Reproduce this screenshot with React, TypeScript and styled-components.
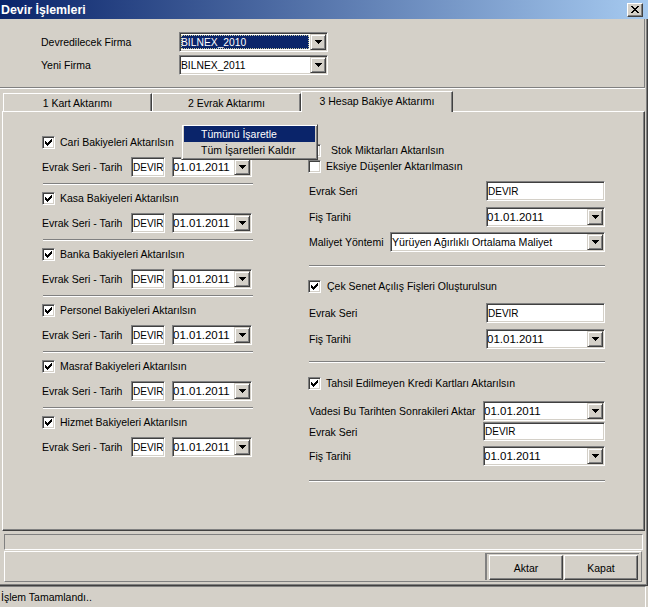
import React from 'react';
import styled, { createGlobalStyle, css } from 'styled-components';

const GlobalStyle = createGlobalStyle`
  * { box-sizing: border-box; }
  html, body { margin: 0; padding: 0; background: #d4d0c8; }
  body {
    font-family: "Liberation Sans", Arial, sans-serif;
    font-size: 10.5px;
    color: #000;
  }
`;

const sunken = css`
  border: 1px solid;
  border-color: #808080 #ffffff #ffffff #808080;
  box-shadow: inset 1px 1px 0 #404040, inset -1px -1px 0 #d4d0c8;
`;

const raised = css`
  border: 1px solid;
  border-color: #ffffff #404040 #404040 #ffffff;
  box-shadow: inset -1px -1px 0 #808080, inset 1px 1px 0 #d4d0c8;
`;

const Screen = styled.div`
  width: 648px;
  height: 607px;
  display: flex;
  flex-direction: column;
  overflow: hidden;
  position: relative;
`;

const Window = styled.div`
  height: 586px;
  flex: none;
  display: flex;
  flex-direction: column;
`;

const TitleBar = styled.div`
  height: 19px;
  flex: none;
  display: flex;
  align-items: center;
  justify-content: space-between;
  padding: 0 5px 0 1px;
  background: linear-gradient(to right, #0a246a, #a6caf0);
  color: #fff;
  font-weight: bold;
  font-size: 12.4px;
`;

const CloseButton = styled.div`
  width: 16px;
  height: 14px;
  background: #d4d0c8;
  ${raised};
  display: flex;
  align-items: center;
  justify-content: center;
`;

const WindowBody = styled.div`
  flex: 1;
  display: flex;
  flex-direction: column;
  border-right: 1px solid #404040;
  border-bottom: 1px solid #404040;
  box-shadow: inset -1px -1px 0 #808080;
  padding-right: 2px;
`;

const Header = styled.div`
  height: 69px;
  flex: none;
  padding: 13px 0 0 41px;
  display: grid;
  grid-template-columns: 138px 149px;
  grid-auto-rows: 20px;
  row-gap: 3px;
  align-items: center;
  border-bottom: 1px solid #808080;
  border-right: 1px solid #808080;
`;

const TabStrip = styled.div`
  height: 23px;
  flex: none;
  display: flex;
  align-items: flex-end;
  padding-left: 3px;
  border-top: 1px solid #ffffff;
`;

const Tab = styled.div<{ $active?: boolean; $w: number }>`
  width: ${p => p.$w}px;
  height: ${p => (p.$active ? 21 : 18)}px;
  margin-bottom: ${p => (p.$active ? -1 : 0)}px;
  position: relative;
  z-index: ${p => (p.$active ? 1 : 0)};
  background: #d4d0c8;
  border-top: 1px solid #fff;
  border-left: 1px solid #fff;
  border-right: 1px solid #404040;
  box-shadow: inset -1px 0 0 #808080;
  display: flex;
  justify-content: center;
  align-items: center;
  padding-bottom: ${p => (p.$active ? 3 : 0)}px;
`;

const Panel = styled.div`
  height: 420px;
  flex: none;
  margin-left: 2px;
  border: 1px solid;
  border-color: #fff #404040 #404040 #fff;
  box-shadow: inset -1px -1px 0 #808080;
  display: grid;
  grid-template-columns: 211px 297px;
  column-gap: 55px;
  align-items: start;
  padding-left: 39px;
`;

const Column = styled.div<{ $top: number }>`
  margin-top: ${p => p.$top}px;
  display: flex;
  flex-direction: column;
`;

const Group = styled.div`
  display: flex;
  flex-direction: column;
  margin-bottom: 5px;
`;

const CheckRow = styled.div<{ $gap?: number; $mt?: number }>`
  height: 16px;
  margin-top: ${p => p.$mt ?? 0}px;
  display: flex;
  align-items: center;
  gap: ${p => p.$gap ?? 5}px;
  white-space: nowrap;
`;

const CheckBoxBox = styled.span`
  width: 13px;
  height: 13px;
  flex: none;
  background: #fff;
  ${sunken};
  display: inline-flex;
  align-items: center;
  justify-content: center;
`;

const SeriRow = styled.div`
  height: 20px;
  margin-top: 7px;
  display: grid;
  grid-template-columns: 82px 34px 80px;
  column-gap: 7px;
  align-items: center;
  white-space: nowrap;
`;

const FieldRow = styled.div<{ $mt: number; $h?: number }>`
  height: ${p => p.$h ?? 20}px;
  margin-top: ${p => p.$mt}px;
  display: flex;
  align-items: center;
  justify-content: space-between;
  padding-left: 1px;
  white-space: nowrap;
`;

const Separator = styled.div<{ $mt: number }>`
  height: 2px;
  margin-top: ${p => p.$mt}px;
  margin-left: 1px;
  border-top: 1px solid #808080;
  border-bottom: 1px solid #fff;
`;

const TextBox = styled.div<{ $w?: number; $h?: number }>`
  width: ${p => (p.$w ? `${p.$w}px` : 'auto')};
  height: ${p => p.$h ?? 20}px;
  background: #fff;
  ${sunken};
  font-size: 10px;
  padding-left: 1px;
  display: flex;
  align-items: center;
  overflow: hidden;
  white-space: nowrap;
`;

const ComboBox = styled.div<{ $w?: number; $h?: number }>`
  width: ${p => (p.$w ? `${p.$w}px` : 'auto')};
  height: ${p => p.$h ?? 20}px;
  background: #fff;
  ${sunken};
  padding: 1px;
  display: flex;
  align-items: stretch;
`;

const ComboText = styled.div<{ $size: number; $selected?: boolean }>`
  flex: 1;
  min-width: 0;
  display: flex;
  align-items: center;
  overflow: hidden;
  white-space: nowrap;
  font-size: ${p => p.$size}px;
  text-indent: ${p => (p.$size > 11 ? -1 : 0)}px;
  ${p =>
    p.$selected &&
    css`
      margin: 1px 1px 1px 0;
      background: #0a246a;
      color: #fff;
      outline: 1px dotted #c8c8a0;
      outline-offset: -1px;
    `}
`;

const ArrowButton = styled.div`
  width: 16px;
  flex: none;
  background: #d4d0c8;
  border: 1px solid;
  border-color: #d4d0c8 #404040 #404040 #d4d0c8;
  box-shadow: inset 1px 1px 0 #fff, inset -1px -1px 0 #808080;
  display: flex;
  align-items: center;
  justify-content: center;
`;

const Popup = styled.div`
  position: absolute;
  left: 181px;
  top: 124px;
  width: 137px;
  height: 36px;
  background: #d4d0c8;
  border: 1px solid;
  border-color: #d4d0c8 #404040 #404040 #d4d0c8;
  box-shadow: inset 1px 1px 0 #fff, inset -1px -1px 0 #808080;
  padding: 1px 2px;
  z-index: 5;
`;

const MenuItem = styled.div<{ $hot?: boolean }>`
  height: 16px;
  display: flex;
  align-items: center;
  padding-left: 17px;
  background: ${p => (p.$hot ? '#0a246a' : 'transparent')};
  color: ${p => (p.$hot ? '#fff' : '#000')};
  white-space: nowrap;
`;

const EmptyBox = styled.div`
  height: 16px;
  flex: none;
  margin: 3px 2px 0 4px;
  border-top: 1px solid #808080;
  border-left: 1px solid #808080;
  border-bottom: 1px solid #fff;
  border-right: 1px solid #fff;
`;

const ButtonPanel = styled.div`
  height: 31px;
  flex: none;
  margin: 1px 3px 0 4px;
  border: 1px solid;
  border-color: #fff #808080 #808080 #fff;
  display: flex;
  justify-content: flex-end;
  align-items: center;
  padding-right: 2px;
`;

const ButtonGroup = styled.div`
  height: 27px;
  display: flex;
  gap: 1px;
  padding: 1px 1px 1px 2px;
  border-top: 1px solid #808080;
  border-left: 2px solid #808080;
`;

const Button = styled.div`
  width: 74px;
  height: 25px;
  background: #d4d0c8;
  ${raised};
  display: flex;
  align-items: center;
  justify-content: center;
`;

const StatusBar = styled.div`
  height: 21px;
  flex: none;
  width: 646px;
  border-top: 1px solid #808080;
  border-right: 1px solid #fff;
  display: flex;
  align-items: center;
  padding-left: 1px;
`;

function CheckBox({ checked }: { checked?: boolean }) {
  return (
    <CheckBoxBox>
      {checked && (
        <svg width="7" height="7" viewBox="0 0 7 7" shapeRendering="crispEdges">
          <path
            fill="#000"
            d="M6 0h1v1h-1z M5 1h2v1h-2z M0 2h1v1h-1z M4 2h3v1h-3z M0 3h2v1h-2z M3 3h3v1h-3z M0 4h5v1h-5z M1 5h3v1h-3z M2 6h1v1h-1z"
          />
        </svg>
      )}
    </CheckBoxBox>
  );
}

function Combo({
  value,
  width,
  height,
  size = 10.5,
  selected,
}: {
  value: string;
  width?: number;
  height?: number;
  size?: number;
  selected?: boolean;
}) {
  return (
    <ComboBox $w={width} $h={height}>
      <ComboText $size={size} $selected={selected}>
        {value}
      </ComboText>
      <ArrowButton>
        <svg width="7" height="4" viewBox="0 0 7 4" shapeRendering="crispEdges">
          <path fill="#000" d="M0 0h7v1h-7z M1 1h5v1h-5z M2 2h3v1h-3z M3 3h1v1h-1z" />
        </svg>
      </ArrowButton>
    </ComboBox>
  );
}

const leftGroups = [
  'Cari Bakiyeleri Aktarılsın',
  'Kasa Bakiyeleri Aktarılsın',
  'Banka Bakiyeleri Aktarılsın',
  'Personel Bakiyeleri Aktarılsın',
  'Masraf Bakiyeleri Aktarılsın',
  'Hizmet Bakiyeleri Aktarılsın',
];

const DATE = '01.01.2011';

export default function App() {
  return (
    <>
      <GlobalStyle />
      <Screen>
        <Window>
          <TitleBar>
            <span>Devir İşlemleri</span>
            <CloseButton>
              <svg width="8" height="7" viewBox="0 0 8 7" shapeRendering="crispEdges">
                <path
                  fill="#000"
                  d="M0 0h2v1h-2z M6 0h2v1h-2z M1 1h2v1h-2z M5 1h2v1h-2z M2 2h4v1h-4z M3 3h2v1h-2z M2 4h4v1h-4z M1 5h2v1h-2z M5 5h2v1h-2z M0 6h2v1h-2z M6 6h2v1h-2z"
                />
              </svg>
            </CloseButton>
          </TitleBar>
          <WindowBody>
            <Header>
              <span>Devredilecek Firma</span>
              <Combo value="BILNEX_2010" width={149} size={10.3} selected />
              <span>Yeni Firma</span>
              <Combo value="BILNEX_2011" width={149} size={10.3} />
            </Header>

            <TabStrip>
              <Tab $w={149}>1 Kart Aktarımı</Tab>
              <Tab $w={149}>2 Evrak Aktarımı</Tab>
              <Tab $w={152} $active>
                3 Hesap Bakiye Aktarımı
              </Tab>
            </TabStrip>

            <Panel>
              <Column $top={22}>
                {leftGroups.map((label, i) => (
                  <Group key={label}>
                    <CheckRow>
                      <CheckBox checked />
                      <span>{label}</span>
                    </CheckRow>
                    <SeriRow>
                      <span>Evrak Seri - Tarih</span>
                      <TextBox>DEVIR</TextBox>
                      <Combo value={DATE} size={11.5} />
                    </SeriRow>
                    {i < leftGroups.length - 1 && <Separator $mt={6} />}
                  </Group>
                ))}
              </Column>

              <Column $top={30}>
                <CheckRow $gap={10}>
                  <CheckBox checked />
                  <span>Stok Miktarları Aktarılsın</span>
                </CheckRow>
                <CheckRow>
                  <CheckBox />
                  <span>Eksiye Düşenler Aktarılmasın</span>
                </CheckRow>
                <FieldRow $mt={7}>
                  <span>Evrak Seri</span>
                  <TextBox $w={119}>DEVIR</TextBox>
                </FieldRow>
                <FieldRow $mt={6}>
                  <span>Fiş Tarihi</span>
                  <Combo value={DATE} width={119} size={11.5} />
                </FieldRow>
                <FieldRow $mt={5}>
                  <span>Maliyet Yöntemi</span>
                  <Combo value="Yürüyen Ağırlıklı Ortalama Maliyet" width={215} size={10.6} />
                </FieldRow>
                <Separator $mt={13} />

                <CheckRow $mt={11} $gap={6}>
                  <CheckBox checked />
                  <span>Çek Senet Açılış Fişleri Oluşturulsun</span>
                </CheckRow>
                <FieldRow $mt={9}>
                  <span>Evrak Seri</span>
                  <TextBox $w={119}>DEVIR</TextBox>
                </FieldRow>
                <FieldRow $mt={6}>
                  <span>Fiş Tarihi</span>
                  <Combo value={DATE} width={119} size={11.5} />
                </FieldRow>
                <Separator $mt={12} />

                <CheckRow $mt={12}>
                  <CheckBox checked />
                  <span>Tahsil Edilmeyen Kredi Kartları Aktarılsın</span>
                </CheckRow>
                <FieldRow $mt={10}>
                  <span>Vadesi Bu Tarihten Sonrakileri Aktar</span>
                  <Combo value={DATE} width={122} size={11.5} />
                </FieldRow>
                <FieldRow $mt={1} $h={19}>
                  <span>Evrak Seri</span>
                  <TextBox $w={122} $h={19}>
                    DEVIR
                  </TextBox>
                </FieldRow>
                <FieldRow $mt={5}>
                  <span>Fiş Tarihi</span>
                  <Combo value={DATE} width={122} size={11.5} />
                </FieldRow>
                <Separator $mt={14} />
              </Column>
            </Panel>

            <EmptyBox />
            <ButtonPanel>
              <ButtonGroup>
                <Button>Aktar</Button>
                <Button>Kapat</Button>
              </ButtonGroup>
            </ButtonPanel>
          </WindowBody>
        </Window>
        <StatusBar>İşlem Tamamlandı..</StatusBar>

        <Popup>
          <MenuItem $hot>Tümünü İşaretle</MenuItem>
          <MenuItem>Tüm İşaretleri Kaldır</MenuItem>
        </Popup>
      </Screen>
    </>
  );
}
